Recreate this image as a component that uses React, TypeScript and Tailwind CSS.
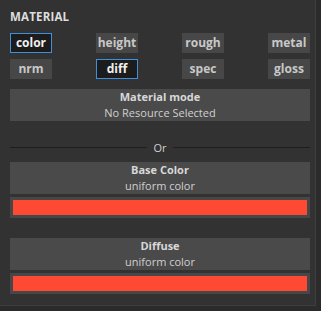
import React from "react";

const font = { fontFamily: '"Open Sans", "Noto Sans", sans-serif' };

const Tag = ({ label, active }: { label: string; active?: boolean }) => (
  <div
    className={
      "w-[42px] h-[20px] flex items-center justify-center text-[12px] font-bold leading-none " +
      (active
        ? "bg-[#1c1c1c] border border-[#3f8fe0] text-[#f0f0f0]"
        : "bg-[#474747] text-[#c8c8c8]")
    }
  >
    {label}
  </div>
);

const Slot = ({ title, sub }: { title: string; sub: string }) => (
  <div className="bg-[#4a4a4a] h-[32px] flex flex-col items-center justify-center leading-[16px]">
    <span className="text-[11px] font-bold text-[#d8d8d8]">{title}</span>
    <span className="text-[11px] text-[#d0d0d0]">{sub}</span>
  </div>
);

const Swatch = () => (
  <div className="mt-[3px] bg-[#474747] h-[21px] p-[3px] flex">
    <div className="flex-1 bg-[#fe4a32]" />
  </div>
);

export default function App() {
  return (
    <div className="w-[321px] h-[311px] bg-[#2b2b2b]" style={font}>
      <div className="w-[316px] h-[306px] bg-[#323232] border-r border-b border-[#3d3d3d] pl-[10px] pr-[5px] pt-[8px]">
        <div className="text-[11.5px] font-bold text-[#dedede] tracking-[0.2px]">MATERIAL</div>

        {/* channel toggles */}
        <div className="mt-[8px] flex flex-col gap-[6px]">
          <div className="flex justify-between">
            <Tag label="color" active />
            <Tag label="height" />
            <Tag label="rough" />
            <Tag label="metal" />
          </div>
          <div className="flex justify-between">
            <Tag label="nrm" />
            <Tag label="diff" active />
            <Tag label="spec" />
            <Tag label="gloss" />
          </div>
        </div>

        <div className="mt-[10px]">
          <Slot title="Material mode" sub="No Resource Selected" />
        </div>

        {/* divider */}
        <div className="mt-[20px] flex items-center h-[12px]">
          <div className="flex-1 h-px bg-[#1e1e1e]" />
          <span className="px-[6px] text-[11px] text-[#cfcfcf] leading-none">Or</span>
          <div className="flex-1 h-px bg-[#1e1e1e]" />
        </div>

        <div className="mt-[9px]">
          <Slot title="Base Color" sub="uniform color" />
          <Swatch />
        </div>

        <div className="mt-[20px]">
          <Slot title="Diffuse" sub="uniform color" />
          <Swatch />
        </div>
      </div>
    </div>
  );
}
